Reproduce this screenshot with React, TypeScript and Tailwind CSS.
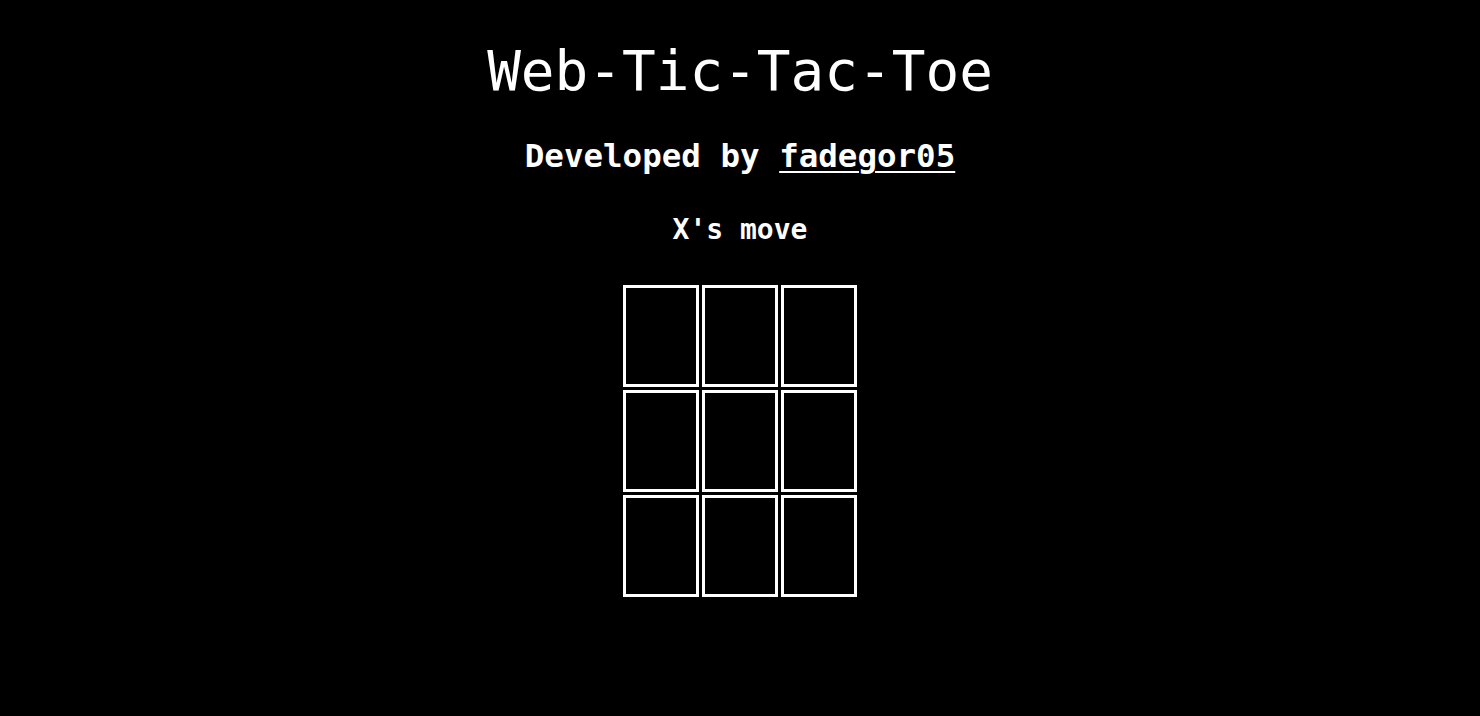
import { useState } from "react";

type Cell = "X" | "O" | null;

function App() {
  const [cells, setCells] = useState<Cell[]>(Array(9).fill(null));
  const [xIsNext, setXIsNext] = useState(true);

  const handleClick = (index: number) => {
    if (cells[index]) return;
    const next = cells.slice();
    next[index] = xIsNext ? "X" : "O";
    setCells(next);
    setXIsNext(!xIsNext);
  };

  return (
    <div className="flex min-h-screen flex-col items-center bg-black font-['DejaVu_Sans_Mono',monospace] text-white">
      <h1 className="mt-[43px] text-[56px] font-normal leading-none">Web-Tic-Tac-Toe</h1>
      <h2 className="mt-[41px] text-[32.5px] font-semibold leading-none">
        Developed by{" "}
        <a href="#" className="underline decoration-2 underline-offset-[4px]">
          fadegor05
        </a>
      </h2>
      <p className="mt-[43px] text-[28px] font-semibold leading-none">
        {xIsNext ? "X" : "O"}'s move
      </p>
      <div className="mt-[41px] grid grid-cols-[repeat(3,76px)] gap-[3px]">
        {cells.map((cell, i) => (
          <button
            key={i}
            onClick={() => handleClick(i)}
            className="flex h-[102px] w-[76px] items-center justify-center border-[3px] border-white bg-black text-5xl text-white"
          >
            {cell}
          </button>
        ))}
      </div>
    </div>
  );
}

export default App;
